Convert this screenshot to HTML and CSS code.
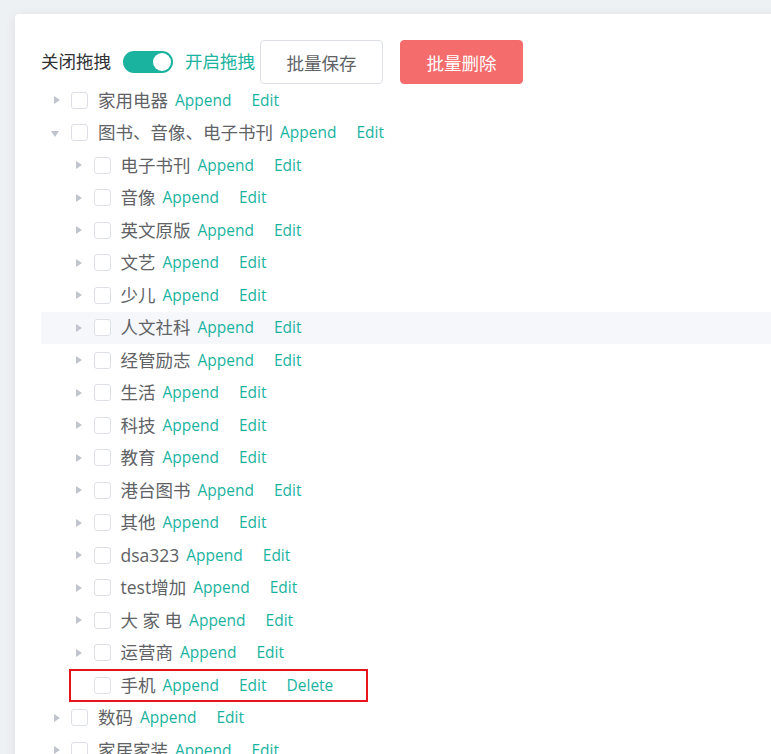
FILE: index.html
```html
<!DOCTYPE html>
<html lang="zh">
<head>
<meta charset="utf-8">
<title>Tree</title>
<link rel="stylesheet" href="styles.css">
</head>
<body>
<div class="card">
  <div class="toolbar">
    <span class="sw-label">关闭拖拽</span>
    <span class="switch"><span class="knob"></span></span>
    <span class="sw-label on">开启拖拽</span>
    <button class="btn">批量保存</button>
    <button class="btn danger">批量删除</button>
  </div>
  <div class="tree">
    <div class="node l1"><span class="caret"></span><span class="cb"></span><span class="label">家用电器</span><span class="act">Append</span><span class="act">Edit</span></div>
    <div class="node l1"><span class="caret open"></span><span class="cb"></span><span class="label">图书、音像、电子书刊</span><span class="act">Append</span><span class="act">Edit</span></div>
    <div class="node l2"><span class="caret"></span><span class="cb"></span><span class="label">电子书刊</span><span class="act">Append</span><span class="act">Edit</span></div>
    <div class="node l2"><span class="caret"></span><span class="cb"></span><span class="label">音像</span><span class="act">Append</span><span class="act">Edit</span></div>
    <div class="node l2"><span class="caret"></span><span class="cb"></span><span class="label">英文原版</span><span class="act">Append</span><span class="act">Edit</span></div>
    <div class="node l2"><span class="caret"></span><span class="cb"></span><span class="label">文艺</span><span class="act">Append</span><span class="act">Edit</span></div>
    <div class="node l2"><span class="caret"></span><span class="cb"></span><span class="label">少儿</span><span class="act">Append</span><span class="act">Edit</span></div>
    <div class="node l2 hover"><span class="caret"></span><span class="cb"></span><span class="label">人文社科</span><span class="act">Append</span><span class="act">Edit</span></div>
    <div class="node l2"><span class="caret"></span><span class="cb"></span><span class="label">经管励志</span><span class="act">Append</span><span class="act">Edit</span></div>
    <div class="node l2"><span class="caret"></span><span class="cb"></span><span class="label">生活</span><span class="act">Append</span><span class="act">Edit</span></div>
    <div class="node l2"><span class="caret"></span><span class="cb"></span><span class="label">科技</span><span class="act">Append</span><span class="act">Edit</span></div>
    <div class="node l2"><span class="caret"></span><span class="cb"></span><span class="label">教育</span><span class="act">Append</span><span class="act">Edit</span></div>
    <div class="node l2"><span class="caret"></span><span class="cb"></span><span class="label">港台图书</span><span class="act">Append</span><span class="act">Edit</span></div>
    <div class="node l2"><span class="caret"></span><span class="cb"></span><span class="label">其他</span><span class="act">Append</span><span class="act">Edit</span></div>
    <div class="node l2"><span class="caret"></span><span class="cb"></span><span class="label">dsa323</span><span class="act">Append</span><span class="act">Edit</span></div>
    <div class="node l2"><span class="caret"></span><span class="cb"></span><span class="label">test增加</span><span class="act">Append</span><span class="act">Edit</span></div>
    <div class="node l2"><span class="caret"></span><span class="cb"></span><span class="label">大 家 电</span><span class="act">Append</span><span class="act">Edit</span></div>
    <div class="node l2"><span class="caret"></span><span class="cb"></span><span class="label">运营商</span><span class="act">Append</span><span class="act">Edit</span></div>
    <div class="node l2 marked"><span class="caret leaf"></span><span class="cb"></span><span class="label">手机</span><span class="act">Append</span><span class="act">Edit</span><span class="act">Delete</span><span class="mark"></span></div>
    <div class="node l1"><span class="caret"></span><span class="cb"></span><span class="label">数码</span><span class="act">Append</span><span class="act">Edit</span></div>
    <div class="node l1"><span class="caret"></span><span class="cb"></span><span class="label">家居家装</span><span class="act">Append</span><span class="act">Edit</span></div>
  </div>
</div>
</body>
</html>
```
FILE: styles.css
```css
html, body {
  margin: 0;
  padding: 0;
  height: 754px;
  overflow: hidden;
  background: #eef1f3;
  font-family: "Open Sans", "Noto Sans CJK SC", sans-serif;
}
body {
  padding: 14px 0 0 15px;
  box-sizing: border-box;
}
.card {
  width: 900px;
  min-height: 800px;
  background: #fff;
  border-radius: 4px;
  box-shadow: 0 2px 12px rgba(0, 0, 0, 0.08);
  padding: 26px 0 0 26px;
  box-sizing: border-box;
}
.toolbar {
  display: flex;
  align-items: center;
  height: 44px;
}
.sw-label {
  font-size: 17.5px;
  color: #303133;
  line-height: 1;
}
.sw-label.on {
  color: #1ab3a0;
}
.switch {
  width: 50px;
  height: 22px;
  border-radius: 11px;
  background: #1ab3a0;
  margin: 0 12px;
  display: flex;
  align-items: center;
  justify-content: flex-end;
  padding: 0 2px;
  box-sizing: border-box;
}
.knob {
  width: 18px;
  height: 18px;
  border-radius: 50%;
  background: #fff;
}
.btn {
  height: 44px;
  width: 123px;
  border: 1px solid #dcdfe6;
  border-radius: 4px;
  background: #fff;
  color: #606266;
  font-family: "Open Sans", "Noto Sans CJK SC", sans-serif;
  font-size: 17.5px;
  padding: 0;
  margin-left: 5px;
}
.btn.danger {
  background: #f56c6c;
  border-color: #f56c6c;
  color: #fff;
  margin-left: 17px;
}
.tree {
  display: flex;
  flex-direction: column;
}
.node {
  position: relative;
  display: flex;
  align-items: center;
  height: 32.5px;
  flex: none;
}
.node.l2 {
  padding-left: 22.5px;
}
.node.hover {
  background: #f5f7fa;
}
.caret {
  width: 30px;
  height: 32.5px;
  display: flex;
  align-items: center;
  justify-content: center;
  flex: none;
}
.caret::before {
  content: "";
  width: 0;
  height: 0;
  border-left: 6px solid #c0c4cc;
  border-top: 4px solid transparent;
  border-bottom: 4px solid transparent;
  margin-left: 1px;
}
.caret.open::before {
  border-left: 4px solid transparent;
  border-right: 4px solid transparent;
  border-top: 6px solid #c0c4cc;
  border-bottom: 0;
  margin-left: -2px;
  margin-top: 2px;
}
.caret.leaf::before {
  border-color: transparent;
}
.cb {
  width: 17px;
  height: 17px;
  box-sizing: border-box;
  border: 1px solid #dcdfe6;
  border-radius: 3px;
  background: #fff;
  margin-right: 10px;
  flex: none;
}
.label {
  font-size: 17.5px;
  color: #606266;
  line-height: 1;
  white-space: pre;
}
.act {
  font-size: 15.5px;
  color: #1ab3a0;
  line-height: 1;
  margin-left: 20px;
}
.label + .act {
  margin-left: 7px;
}
.mark {
  position: absolute;
  left: 28px;
  top: 0;
  width: 299px;
  height: 33px;
  border: 2px solid #e8141c;
  box-sizing: border-box;
}
```
